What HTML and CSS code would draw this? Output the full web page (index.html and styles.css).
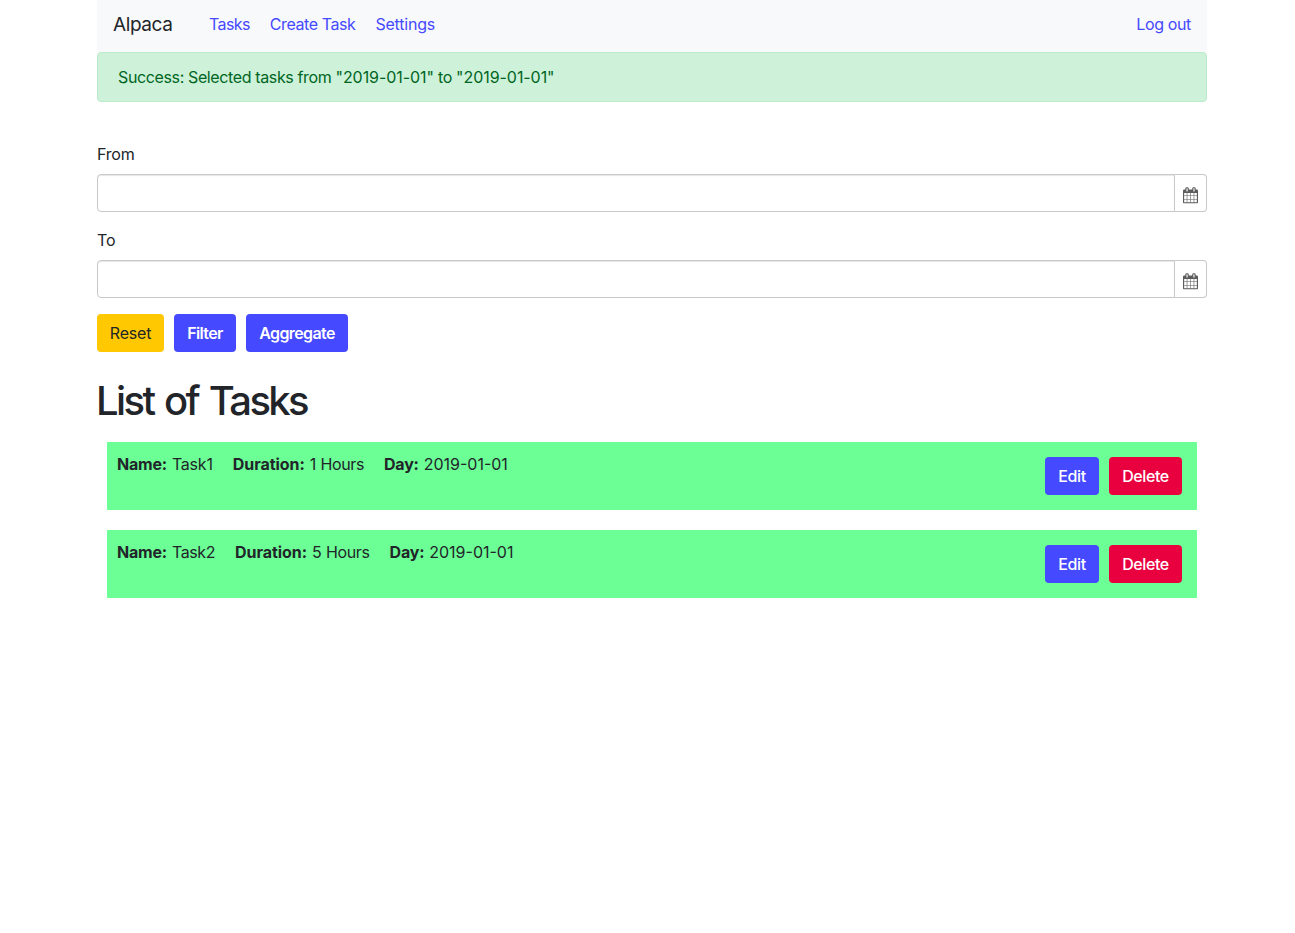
FILE: index.html
```html
<!DOCTYPE html>
<html lang="en">
<head>
<meta charset="utf-8">
<title>Alpaca</title>
<link rel="stylesheet" href="styles.css">
</head>
<body>
<div class="container">
  <nav class="navbar">
    <a class="brand">Alpaca</a>
    <a class="link tasks">Tasks</a>
    <a class="link create">Create Task</a>
    <a class="link settings">Settings</a>
    <a class="link logout">Log out</a>
  </nav>
  <div class="alert">Success: Selected tasks from <span class="date">"2019-01-01"</span> to <span class="date">"2019-01-01"</span></div>
  <form class="filters">
    <div class="group">
      <label>From</label>
      <div class="field"><input type="text"><span class="addon"><svg class="calendar" viewBox="0 0 1664 1792"><path d="M128 1664h288v-288H128v288zm352 0h320v-288H480v288zm-352-352h288V992H128v320zm352 0h320V992H480v320zM128 928h288V640H128v288zm736 736h320v-288H864v288zM480 928h320V640H480v288zm768 736h288v-288h-288v288zm-384-352h320V992H864v320zM512 448V160q0-13-9.500-22.500T480 128h-64q-13 0-22.500 9.500T384 160v288q0 13 9.500 22.500T416 480h64q13 0 22.500-9.500T512 448zm736 864h288V992h-288v320zM864 928h320V640H864v288zm384 0h288V640h-288v288zm32-480V160q0-13-9.500-22.500T1248 128h-64q-13 0-22.500 9.500T1152 160v288q0 13 9.500 22.500t22.500 9.500h64q13 0 22.500-9.500t9.500-22.500zm384-64v1280q0 52-38 90t-90 38H128q-52 0-90-38t-38-90V384q0-52 38-90t90-38h128v-96q0-66 47-113T416 0h64q66 0 113 47t47 113v96h384v-96q0-66 47-113t113-47h64q66 0 113 47t47 113v96h128q52 0 90 38t38 90z"/></svg></span></div>
    </div>
    <div class="group">
      <label>To</label>
      <div class="field"><input type="text"><span class="addon"><svg class="calendar" viewBox="0 0 1664 1792"><path d="M128 1664h288v-288H128v288zm352 0h320v-288H480v288zm-352-352h288V992H128v320zm352 0h320V992H480v320zM128 928h288V640H128v288zm736 736h320v-288H864v288zM480 928h320V640H480v288zm768 736h288v-288h-288v288zm-384-352h320V992H864v320zM512 448V160q0-13-9.500-22.500T480 128h-64q-13 0-22.500 9.500T384 160v288q0 13 9.500 22.500T416 480h64q13 0 22.500-9.500T512 448zm736 864h288V992h-288v320zM864 928h320V640H864v288zm384 0h288V640h-288v288zm32-480V160q0-13-9.500-22.500T1248 128h-64q-13 0-22.500 9.500T1152 160v288q0 13 9.500 22.500t22.500 9.500h64q13 0 22.500-9.500t9.500-22.500zm384-64v1280q0 52-38 90t-90 38H128q-52 0-90-38t-38-90V384q0-52 38-90t90-38h128v-96q0-66 47-113T416 0h64q66 0 113 47t47 113v96h384v-96q0-66 47-113t113-47h64q66 0 113 47t47 113v96h128q52 0 90 38t38 90z"/></svg></span></div>
    </div>
    <div class="buttons"><a class="btn yellow reset">Reset</a><a class="btn blue filter">Filter</a><a class="btn blue aggregate">Aggregate</a></div>
  </form>
  <h1>List of Tasks</h1>
  <div class="task">
    <p class="pair"><b>Name:</b> <span>Task1</span></p>
    <p class="pair"><b class="wide">Duration:</b> <span class="hours">1 Hours</span></p>
    <p class="pair"><b>Day:</b> <span class="date">2019-01-01</span></p>
    <div class="actions"><a class="btn blue edit">Edit</a><a class="btn red delete">Delete</a></div>
  </div>
  <div class="task">
    <p class="pair"><b>Name:</b> <span class="hours">Task2</span></p>
    <p class="pair"><b class="wide">Duration:</b> <span class="hours">5 Hours</span></p>
    <p class="pair"><b>Day:</b> <span class="date">2019-01-01</span></p>
    <div class="actions"><a class="btn blue edit">Edit</a><a class="btn red delete">Delete</a></div>
  </div>
</div>
</body>
</html>
```
FILE: styles.css
```css
* { box-sizing: border-box; }
body { margin: 0; background: #fff; color: #212529; font: 400 16px/24px Inter, sans-serif; letter-spacing: -0.2px; }
.container { width: 1110px; margin-left: 97px; }
.navbar { height: 52px; padding: 0 16px; display: flex; align-items: flex-start; background: #f8f9fa; white-space: nowrap; }
.brand { width: 96px; font-size: 19px; line-height: 49px; letter-spacing: -0.4px; }
.link { color: #4549ff; line-height: 48px; margin-right: 20px; letter-spacing: -0.42px; }
.tasks { letter-spacing: -0.6px; }
.settings { letter-spacing: -0.2px; }
.logout { margin: 0 0 0 auto; letter-spacing: -0.35px; }
.alert { height: 50px; padding: 12px 20px; border: 1px solid #bcebcb; border-radius: 4px; background: #cdf1d9; color: #006622; letter-spacing: -0.37px; }
.date { letter-spacing: 0; }
.alert .date { letter-spacing: -0.06px; }
.filters { padding-top: 40px; }
.group { height: 86px; }
label { display: block; margin-bottom: 8px; }
.field { display: flex; height: 38px; }
input { flex: 1; border: 1px solid #c8c8c8; border-radius: 4px 0 0 4px; padding: 6px 12px; box-shadow: inset 0 1px 1px rgba(0,0,0,.1); }
.addon { width: 32px; border: 1px solid #c8c8c8; border-left: 0; border-radius: 0 4px 4px 0; padding: 12px 0 0 7.500px; }
.calendar { display: block; width: 15px; height: 16.500px; fill: #5c5c5c; }
.buttons, .actions { display: flex; gap: 10px; }
.btn { height: 38px; border-radius: 4px; line-height: 38px; text-align: center; color: #fff; font-weight: 550; letter-spacing: -0.4px; white-space: nowrap; }
.blue { background: #4549ff; }
.yellow { background: #ffc800; color: #212529; font-weight: 400; letter-spacing: -0.2px; }
.red { background: #e9003f; }
.buttons .blue { font-weight: 600; letter-spacing: -0.6px; }
.reset { width: 67px; }
.filter { width: 62px; }
.aggregate { width: 102px; }
.edit { width: 54px; }
.delete { width: 73px; }
h1 { margin: 25px 0 17px -1px; font-size: 40px; line-height: 48px; font-weight: 550; letter-spacing: -2.6px; word-spacing: 2.500px; }
.task { display: flex; height: 68px; margin: 0 10px 20px; padding: 10px; background: #6bff95; white-space: nowrap; }
.pair { margin: 0 20px 0 0; word-spacing: 0.6px; }
.wide { letter-spacing: -0.05px; }
.hours { letter-spacing: -0.38px; }
.actions { margin: 5px 5px 0 auto; }
```
